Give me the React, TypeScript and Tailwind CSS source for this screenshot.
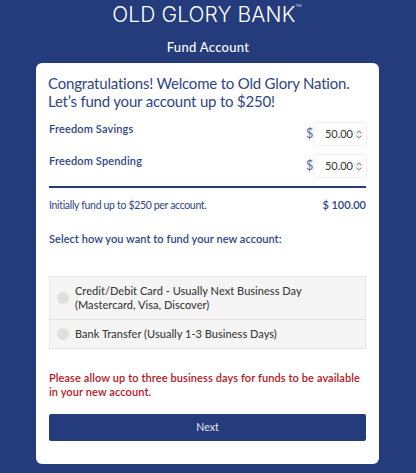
// App.tsx - Old Glory Bank fund account step

const font = "[font-family:Lato,'Noto_Sans',sans-serif]";

function Spinner() {
  return (
    <span className="flex h-[11px] w-[9px] items-center justify-center rounded-full bg-[#f1f1f1]">
      <svg width="6" height="9" viewBox="0 0 7 10" fill="none" stroke="#666" strokeWidth="1">
        <path d="M1 3.5 3.5 1 6 3.5" />
        <path d="M1 6.5 3.5 9 6 6.5" />
      </svg>
    </span>
  );
}

function AmountRow({ label }: { label: string }) {
  return (
    <div className="flex h-[32px] items-start justify-between">
      <span className="text-[11px] leading-[18px] font-semibold tracking-[0.15px] text-[#2f4585]">{label}</span>
      <div className="mt-[3px] flex items-center">
        <span className="w-[8px] text-[12.5px] text-[#4a63a3]">$</span>
        <div className="flex h-[22px] w-[52px] items-center justify-end gap-[1px] rounded-[2px] pr-[3px] text-[11px] text-[#333] shadow-[0_0_2px_rgba(0,0,0,0.22)]">
          <span>50.00</span>
          <Spinner />
        </div>
      </div>
    </div>
  );
}

function Radio() {
  return <span className="h-[12px] w-[12px] shrink-0 rounded-full bg-[#dfdfdf]" />;
}

export default function App() {
  return (
    <div className={`flex h-[473px] w-[416px] flex-col items-center overflow-hidden bg-[#243b7c] ${font}`}>
      <div className="mt-[2px] ml-[-2px] flex h-[25px] items-start text-[21px] leading-[25px] font-light tracking-[0.1px] text-white [font-family:Inter,sans-serif]">
        OLD GLORY BANK
        <span className="mt-[1px] text-[4px] leading-[6px]">TM</span>
      </div>
      <div className="mt-[11px] text-[13px] leading-[18px] font-medium tracking-[0.3px] text-white">Fund Account</div>
      <div className="mt-[7px] ml-[-1px] flex h-[401px] w-[343px] flex-col rounded-[6px] bg-white px-[13px]">
        <p className="mt-[11px] ml-[-1px] text-[15px] leading-[18px] tracking-[-0.2px] text-[#2f4585]">
          Congratulations! Welcome to Old Glory Nation.
          <br />
          Let’s fund your account up to $250!
        </p>
        <div className="mt-[10px]">
          <AmountRow label="Freedom Savings" />
          <AmountRow label="Freedom Spending" />
        </div>
        <div className="mt-[2px] h-[2px] bg-[#243b7c]" />
        <div className="mt-[8px] flex items-center justify-between text-[#2f4585]">
          <span className="text-[10.5px] leading-[18px] tracking-[-0.33px]">Initially fund up to $250 per account.</span>
          <span className="text-[11px] font-semibold">$ 100.00</span>
        </div>
        <p className="mt-[16px] text-[11px] leading-[18px] font-semibold tracking-[0.05px] text-[#2f4585]">
          Select how you want to fund your new account:
        </p>
        <div className="mt-[28px] border border-[#e6e6e6] bg-[#f5f5f5] text-[11px] tracking-[0.03px] text-[#3c3c3c]">
          <div className="flex h-[43px] items-center gap-[6px] border-b border-[#e0e0e0] pl-[7px]">
            <Radio />
            <span className="leading-[14px] font-medium">
              Credit/Debit Card - Usually Next Business Day
              <br />
              (Mastercard, Visa, Discover)
            </span>
          </div>
          <div className="flex h-[28px] items-center gap-[6px] pl-[7px]">
            <Radio />
            <span className="font-medium">Bank Transfer (Usually 1-3 Business Days)</span>
          </div>
        </div>
        <p className="mt-[22px] text-[11px] leading-[14px] font-semibold tracking-[0.1px] text-[#b5161e]">
          Please allow up to three business days for funds to be available in your new account.
        </p>
        <button className="mt-[15px] h-[27px] rounded-[2px] bg-[#243b7c] text-[10.5px] text-[#e6e9f2]">Next</button>
      </div>
    </div>
  );
}
